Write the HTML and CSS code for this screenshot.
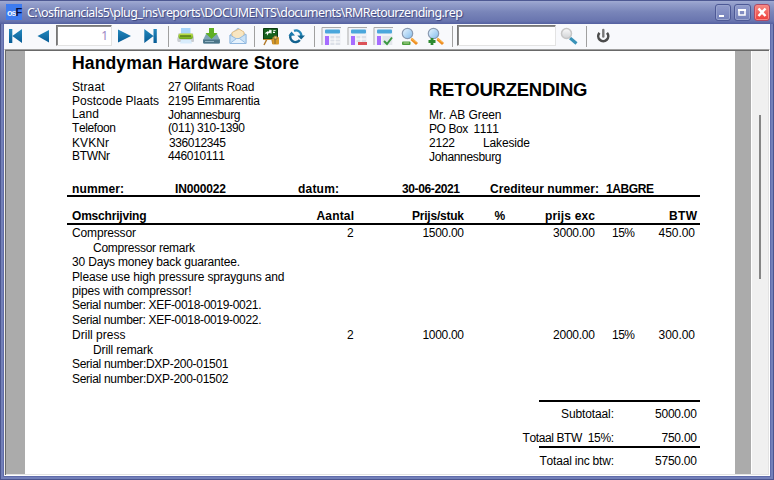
FILE: index.html
```html
<!DOCTYPE html>
<html lang="nl">
<head>
<meta charset="utf-8">
<title>RMRetourzending.rep</title>
<link rel="stylesheet" href="styles.css">
</head>
<body>
<div class="window">
  <header class="titlebar">
    <span class="app-icon"><span>os</span><b>F</b></span>
    <h1 class="caption"><span data-w="436">C:\osfinancials5\plug_ins\reports\DOCUMENTS\documents\RMRetourzending.rep</span></h1>
    <div class="controls">
      <button class="control"><svg width="17" height="17"><path d="M4 11h5v2H4z" fill="#fff"/></svg></button>
      <button class="control"><svg width="17" height="17"><path d="M5 6h6v5H5z" fill="none" stroke="#fff" stroke-width="1.6"/><path d="M4 5h8v2H4z" fill="#fff"/></svg></button>
      <button class="control close"><svg width="17" height="17"><path d="M4.500 4.500l7 7.500M11.500 4.500l-7 7.500" stroke="#fff" stroke-width="2.500"/></svg></button>
    </div>
  </header>

  <nav class="toolbar">
    <svg class="tool" viewBox="0 0 26 25"><path d="M5 5h3.300v14H5zM18 5v14L8.300 12z" fill="url(#blue)"/>
      <defs>
        <linearGradient id="blue" x2="0" y2="1"><stop stop-color="#2388bd"/><stop offset="1" stop-color="#075c96"/></linearGradient>
        <linearGradient id="silver" x2="0" y2="1"><stop stop-color="#fafafa"/><stop offset="1" stop-color="#d0d2d5"/></linearGradient>
        <linearGradient id="lens" x2="1" y2="1"><stop stop-color="#ecf7ff"/><stop offset="1" stop-color="#80bbec"/></linearGradient>
        <linearGradient id="green" x2="0" y2="1"><stop stop-color="#c5e74b"/><stop offset="1" stop-color="#66a317"/></linearGradient>
      </defs></svg>
    <svg class="tool" viewBox="0 0 26 25"><path d="M19 6v12.500L7.500 12z" fill="url(#blue)"/></svg>
    <div class="field page-field">1</div>
    <svg class="tool" viewBox="0 0 26 25"><path d="M6 5.500v13L19 12z" fill="url(#blue)"/></svg>
    <svg class="tool" viewBox="0 0 26 25"><path d="M6.300 5v14L15.500 12zM15.500 5h3.300v14h-3.300z" fill="url(#blue)"/></svg>
    <i class="sep wide"></i>
    <svg class="tool" viewBox="0 0 26 25"><path d="M8 4h9.500v7H8z" fill="#a9d5fa"/><path d="M5.500 9.500h14.500l1 7h-16.500z" fill="#aeb4b9"/><rect x="4.500" y="13" width="16.500" height="5" rx="1" fill="#c9cdd2"/><rect x="5.500" y="9.500" width="14.500" height="5.500" rx="2" fill="url(#green)"/><path d="M7 12h11" stroke="#38550e"/><path d="M8 16h10l1 3.500H7z" fill="#d8ecfb"/></svg>
    <svg class="tool" viewBox="0 0 26 25"><path d="M7 10h11l3 6v2.500q0 1-1 1H5q-1 0-1-1V16z" fill="#7fa5b8"/><path d="M4.200 15.500h16.600v3q0 1-1 1H5.200q-1 0-1-1z" fill="#4a7487"/><path d="M6 17.500h9" stroke="#8fb2c1"/><path d="M10 4h5v5h3.500l-6 6-6-6H10z" fill="#5faf24"/></svg>
    <svg class="tool" viewBox="0 0 26 25"><path d="M5 11l8-7 8 7v8.500H5z" fill="#b8d7f2" stroke="#90b7db" stroke-width=".7"/><path d="M7 8.500l7-3.500 5 3v6l-6 3-6-4z" fill="#f8e6c1" stroke="#e0b574" stroke-width=".8"/><path d="M5 11l7.500 4.500L21 10v9.500H5z" fill="#c9e2f7" stroke="#86b1dc" stroke-width=".8"/><path d="M5.500 19l6-4.500h3l6 4.500" fill="#e5f2fd" stroke="#86b1dc" stroke-width=".8"/></svg>
    <i class="sep group-a"></i>
    <svg class="tool" viewBox="0 0 26 25"><path d="M9 15l-3 6M14 15l1 5" stroke="#b17a2b" stroke-width="1.500"/><path d="M5.500 4.500h14v10.500h-14z" fill="#17621e" stroke="#0c3b12"/><path d="M7.500 9.500l2-1.500v2l2-3v2l1.500-3v3.500M15 7l2.500-.5M15 8.500h2" stroke="#fff" stroke-width="1.100" fill="none"/><path d="M5 15.500h13" stroke="#c28c31"/><rect x="14.500" y="13" width="6.500" height="7.500" rx="1" fill="#d99b28"/><path d="M16 12h3v3h-3zM17 15v5" stroke="#6e5a35" fill="#f5d26b" stroke-width=".8"/></svg>
    <svg class="tool" viewBox="0 0 26 25"><g fill="none" stroke-width="2.400"><path d="M10 6.800A5.300 5.300 0 0 1 17.300 12" stroke="#2587b8"/><path d="M7.300 9.500A5.300 5.300 0 0 0 15.800 16" stroke="#12628f"/></g><path d="M13.300 11.500h7.700l-3.800 4z" fill="#12648f"/><path d="M4.500 12l3-4.500 3.500 4z" fill="#1a78ab"/></svg>
    <i class="sep group-b"></i>
    <svg class="tool" viewBox="0 0 26 25"><path d="M3 21V3.500h19" fill="none" stroke="#aaa"/><path d="M4 4h18v17H4z" fill="#f2f3f7"/><rect x="6" y="5.500" width="15" height="4" rx="1" fill="#4ba7dc"/><path d="M6 12h4v9H6z" fill="#a66cff"/><path d="M11.500 12H21v9h-9.500z" fill="#dce0e8"/><path d="M11 15h10M11 18h10M16 12v9" stroke="#fff"/></svg>
    <svg class="tool" viewBox="0 0 26 25"><path d="M3 21V3.500h19" fill="none" stroke="#aaa"/><path d="M4 4h18v17H4z" fill="#f2f3f7"/><rect x="6" y="5.500" width="15" height="4" rx="1" fill="#4ba7dc"/><path d="M6 12h4v9H6z" fill="#a66cff"/><path d="M11.500 12H21v6h-9.500z" fill="#dce0e8"/><path d="M11 15h10M16 12v6" stroke="#fff"/><path d="M13 18h9v3h-9z" fill="#dc5259"/></svg>
    <svg class="tool" viewBox="0 0 26 25"><path d="M3 21V3.500h19" fill="none" stroke="#aaa"/><path d="M4 4h18v17H4z" fill="#f2f3f7"/><rect x="6" y="5.500" width="15" height="4" rx="1" fill="#4ba7dc"/><path d="M6 12h4v9H6z" fill="#a66cff"/><path d="M11.500 12H21v9h-9.500z" fill="#e3e6ec"/><path d="M13 17l3 3 5-6.500" fill="none" stroke="#3b9843" stroke-width="2"/></svg>
    <svg class="tool" viewBox="0 0 26 25"><path d="M14.500 15l5.500 5" stroke="#ee8c20" stroke-width="3"/><path d="M14 14l5.500 4.500" stroke="#ffc357"/><circle cx="10.500" cy="9.500" r="5.200" fill="url(#lens)" stroke="#8b9ab1" stroke-width="1.200"/><rect x="5" y="17.500" width="8.500" height="3.500" rx="1" fill="#4b9d3c"/><path d="M6.500 19h5.500" stroke="#b0da94"/></svg>
    <svg class="tool" viewBox="0 0 26 25"><path d="M14.500 15l5.500 5" stroke="#ee8c20" stroke-width="3"/><path d="M14 14l5.500 4.500" stroke="#ffc357"/><circle cx="10.500" cy="9.500" r="5.200" fill="url(#lens)" stroke="#8b9ab1" stroke-width="1.200"/><path d="M9 14v7M5.500 17.500h7" stroke="#2d8a30" stroke-width="2.800"/></svg>
    <i class="sep group-c"></i>
    <div class="field search-field"></div>
    <svg class="tool" viewBox="0 0 26 25"><path d="M14 14l6.500 5.500" stroke="#3992b8" stroke-width="3"/><circle cx="10.500" cy="9.500" r="5" fill="url(#silver)" stroke="#c6c6c6" stroke-width="1.500"/></svg>
    <i class="sep group-d"></i>
    <svg class="tool" viewBox="0 0 26 25"><path d="M9.500 8.800a5 5 0 1 0 7.500 0" fill="none" stroke="#4c4c4c" stroke-width="2.600"/><path d="M13.300 6v6.500" stroke="#777" stroke-width="2.400" stroke-linecap="round"/></svg>
  </nav>

  <main class="viewer">
    <article class="page">
      <section class="top">
        <div class="company">
          <h2><span data-w="227">Handyman Hardware Store</span></h2>
          <div class="details">
            <dl class="labels">
              <dt><span data-w="32.500">Straat</span></dt>
              <dt><span data-w="87">Postcode Plaats</span></dt>
              <dt><span data-w="27">Land</span></dt>
              <dt><span data-w="44">Telefoon</span></dt>
              <dt><span data-w="37">KVKNr</span></dt>
              <dt><span data-w="38">BTWNr</span></dt>
            </dl>
            <dl class="values">
              <dd><span data-w="86.500">27 Olifants Road</span></dd>
              <dd><span data-w="92">2195 Emmarentia</span></dd>
              <dd><span data-w="72.500">Johannesburg</span></dd>
              <dd><span data-w="77">(011) 310-1390</span></dd>
              <dd class="nudge"><span data-w="57">336012345</span></dd>
              <dd><span data-w="57">446010111</span></dd>
            </dl>
          </div>
        </div>
        <div class="creditor">
          <h2 class="doc-title"><span data-w="158.500">RETOURZENDING</span></h2>
          <p><span data-w="72.500">Mr. AB Green</span></p>
          <p><span data-w="70">PO Box&nbsp; 1111</span></p>
          <p class="city"><span data-w="26">2122</span><span data-w="47">Lakeside</span></p>
          <p><span data-w="72.500">Johannesburg</span></p>
        </div>
      </section>

      <section class="reference">
        <span data-w="52">nummer:</span><span data-w="51">IN000022</span>
        <span data-w="41">datum:</span><span data-w="58">30-06-2021</span>
        <span data-w="109">Crediteur nummer:</span><span data-w="48">1ABGRE</span>
      </section>

      <section class="items">
        <div class="row head">
          <span data-w="74.500">Omschrijving</span><span data-w="37.500">Aantal</span><span data-w="52">Prijs/stuk</span><span data-w="9.500">%</span><span data-w="50">prijs exc</span><span></span><span class="vat" data-w="28">BTW</span>
        </div>
        <div class="row">
          <span data-w="64">Compressor</span><span data-w="7">2</span><span data-w="41.500">1500.00</span><span></span><span data-w="42">3000.00</span><span data-w="23">15%</span><span data-w="36.500">450.00</span>
        </div>
        <p class="remark"><span data-w="102">Compressor remark</span></p>
        <p class="tall"><span data-w="168">30 Days money back guarantee.</span></p>
        <p><span data-w="212.500">Please use high pressure sprayguns and</span></p>
        <p><span data-w="119.500">pipes with compressor!</span></p>
        <p class="tall"><span data-w="189.500">Serial number: XEF-0018-0019-0021.</span></p>
        <p class="tall"><span data-w="189.500">Serial number: XEF-0018-0019-0022.</span></p>
        <div class="row">
          <span data-w="53.500">Drill press</span><span data-w="7">2</span><span data-w="41.500">1000.00</span><span></span><span data-w="42">2000.00</span><span data-w="23">15%</span><span data-w="36.500">300.00</span>
        </div>
        <p class="remark"><span data-w="60">Drill remark</span></p>
        <p class="tall"><span data-w="156.500">Serial number:DXP-200-01501</span></p>
        <p><span data-w="156.500">Serial number:DXP-200-01502</span></p>
      </section>

      <section class="totals">
        <div class="total"><span data-w="53">Subtotaal:</span><span data-w="42">5000.00</span></div>
        <div class="total vat-total"><span data-w="91.500">Totaal BTW&nbsp; 15%:</span><span data-w="35.500">750.00</span></div>
        <div class="total grand-total"><span data-w="74.500">Totaal inc btw:</span><span data-w="42">5750.00</span></div>
      </section>
    </article>
    <aside class="scrollbar"><div class="thumb"></div></aside>
  </main>
</div>
<script src="fit.js"></script>
</body>
</html>
```

FILE: styles.css
```css
* { box-sizing: border-box; }
body { margin: 0; overflow: hidden; }
h1, h2, p, dl, dd, dt { margin: 0; font: inherit; }

.window {
  width: 774px;
  height: 480px;
  display: grid;
  grid-template-rows: 24px 25px 427px;
  padding: 0 4px 4px;
  background: #5f6baa;
  box-shadow: inset 0 0 0 1px #4b558f, inset 0 0 0 3px #7380b9;
  font: 12px/14px "Liberation Sans", Arial, sans-serif;
  color: #000;
}

[data-w] { display: inline-block; white-space: pre; font-kerning: none; }

/* Title bar */
.titlebar {
  display: flex;
  align-items: flex-start;
  margin: 0 -4px;
  padding: 4px 4px 0 6px;
  background: linear-gradient(#4e5993 0, #4e5993 1px, #a0aad2 1px, #929dca 4px, #7985b9 12px, #6975af 21px, #5360a0 24px);
}
.app-icon {
  width: 16px;
  height: 16px;
  background: #3d7bf0;
  color: #eaf1ff;
  font: bold 9px/16px "Liberation Sans", sans-serif;
  letter-spacing: -1px;
  white-space: nowrap;
}
.app-icon span { margin-left: 1px; }
.app-icon b { color: #07103e; font-size: 11px; }
.caption {
  margin-left: 5px;
  color: #fff;
  font: 12.500px/18px "Noto Sans", sans-serif;
  text-shadow: 1px 1px 1px #39427c;
}
.controls { display: flex; gap: 3px; margin-left: auto; }
.control {
  width: 16.500px;
  height: 17px;
  padding: 0;
  border: 1px solid #4d5996;
  border-radius: 3px;
  background: linear-gradient(#929ccc, #7380b9);
  box-shadow: inset 0 0 0 1px #98a3ce;
}
.control svg { display: block; margin: -1px; }
.close { background: linear-gradient(#f58c86, #f03c38); border-color: #b14964; box-shadow: inset 0 0 0 1px #f98984; }

/* Toolbar */
.toolbar { display: flex; background: #f8f9fc; }
.tool { width: 26px; height: 25px; flex: none; }
.sep { flex: none; width: 1px; height: 21px; margin-top: 2px; background: #a0a0a0; }
.wide { margin: 2px 4px 0; }
.group-a { margin: 2px 3px 0; }
.group-b { margin: 2px 4px 0; }
.group-c { margin: 2px 4px 0 3px; }
.group-d { margin: 2px 3px 0 4px; }
.field {
  flex: none;
  height: 21px;
  margin-top: 1px;
  border: 1px solid #e3e3e3;
  border-top: 1px solid #777;
  border-left: 1px solid #777;
  box-shadow: inset 1px 1px #8a8a8a;
  background: #fff;
}
.page-field { width: 56px; padding: 0 3px; text-align: right; color: #9c85c4; font: 12px/19px "Noto Sans", sans-serif; }
.search-field { width: 99px; }

/* Report viewer */
.viewer {
  display: flex;
  overflow: hidden;
  border: 1px solid #a0a0a0;
  border-left-color: #eee;
  border-right-color: #fff;
  border-bottom-color: #fff;
  background: #ababab;
  box-shadow: inset 1px 1px #696969, inset 0 -1px #e3e3e3;
}
.page {
  width: 710px;
  height: 423px;
  margin: 1px 16px 0 20px;
  padding-left: 42px;
  background: #fff;
}
.scrollbar { width: 18px; margin-top: 1px; height: 423px; padding: 64px 0 0 7px; border-left: 1px solid #fff; border-right: 1px solid #e3e3e3; background: #f0f0f0; }
.thumb { width: 2px; height: 164px; background: #858585; }

.top { display: flex; height: 131px; }
.company { width: 362px; padding: 3px 0 0 5px; }
.company h2 { height: 26px; font: bold 17.600px/18px "Liberation Sans", Arial, sans-serif; }
.details { display: flex; }
.labels { display: grid; width: 96px; grid-template-rows: 14px 13px 14px 15px 13px 14px; }
.values { display: grid; grid-template-rows: 14px 14px 13px 15px 13px 14px; }
.nudge { padding-left: 1px; }
.creditor { padding-top: 29px; }
.doc-title { height: 28px; font: bold 18.500px/20px "Liberation Sans", Arial, sans-serif; }
.creditor p { height: 14px; }
.city { display: flex; gap: 28px; }

.reference {
  display: grid;
  grid-template-columns: 103px 123px 104px 88px 116px 1fr;
  justify-items: start;
  width: 633px;
  height: 15px;
  padding-left: 5px;
  border-bottom: 2px solid #000;
  font-weight: bold;
}

.items { width: 633px; }
.row {
  display: grid;
  grid-template-columns: 228px 54px 110px 40px 91px 40px 60px;
  justify-items: end;
  height: 15px;
  padding-left: 5px;
}
.row > :first-child { justify-self: start; }
.head { height: 28px; padding-top: 12px; border-bottom: 2px solid #000; font-weight: bold; margin-bottom: 1px; }
.vat { margin-right: -2px; }
.items p { height: 14px; padding-left: 5px; }
.items .tall { height: 15px; }
.items .remark { padding-left: 26px; }

.totals { width: 161px; margin: 14px 0 0 472px; border-top: 2px solid #000; }
.total {
  display: grid;
  grid-template-columns: 75px 83px;
  justify-items: end;
  height: 24px;
  padding-top: 5px;
}
.vat-total { height: 22px; border-bottom: 2px solid #000; }
.grand-total { padding-top: 6px; }
```

FILE: fit.js
```js
// Spread each report field over its printed width by adjusting the letter spacing.
document.querySelectorAll("[data-w]").forEach((field) => {
  const width = Number(field.dataset.w);
  const gaps = Math.max(field.textContent.length - 1, 1);
  const natural = field.getBoundingClientRect().width;
  field.style.letterSpacing = (width - natural) / gaps + "px";
  field.style.width = width + "px";
});
```
